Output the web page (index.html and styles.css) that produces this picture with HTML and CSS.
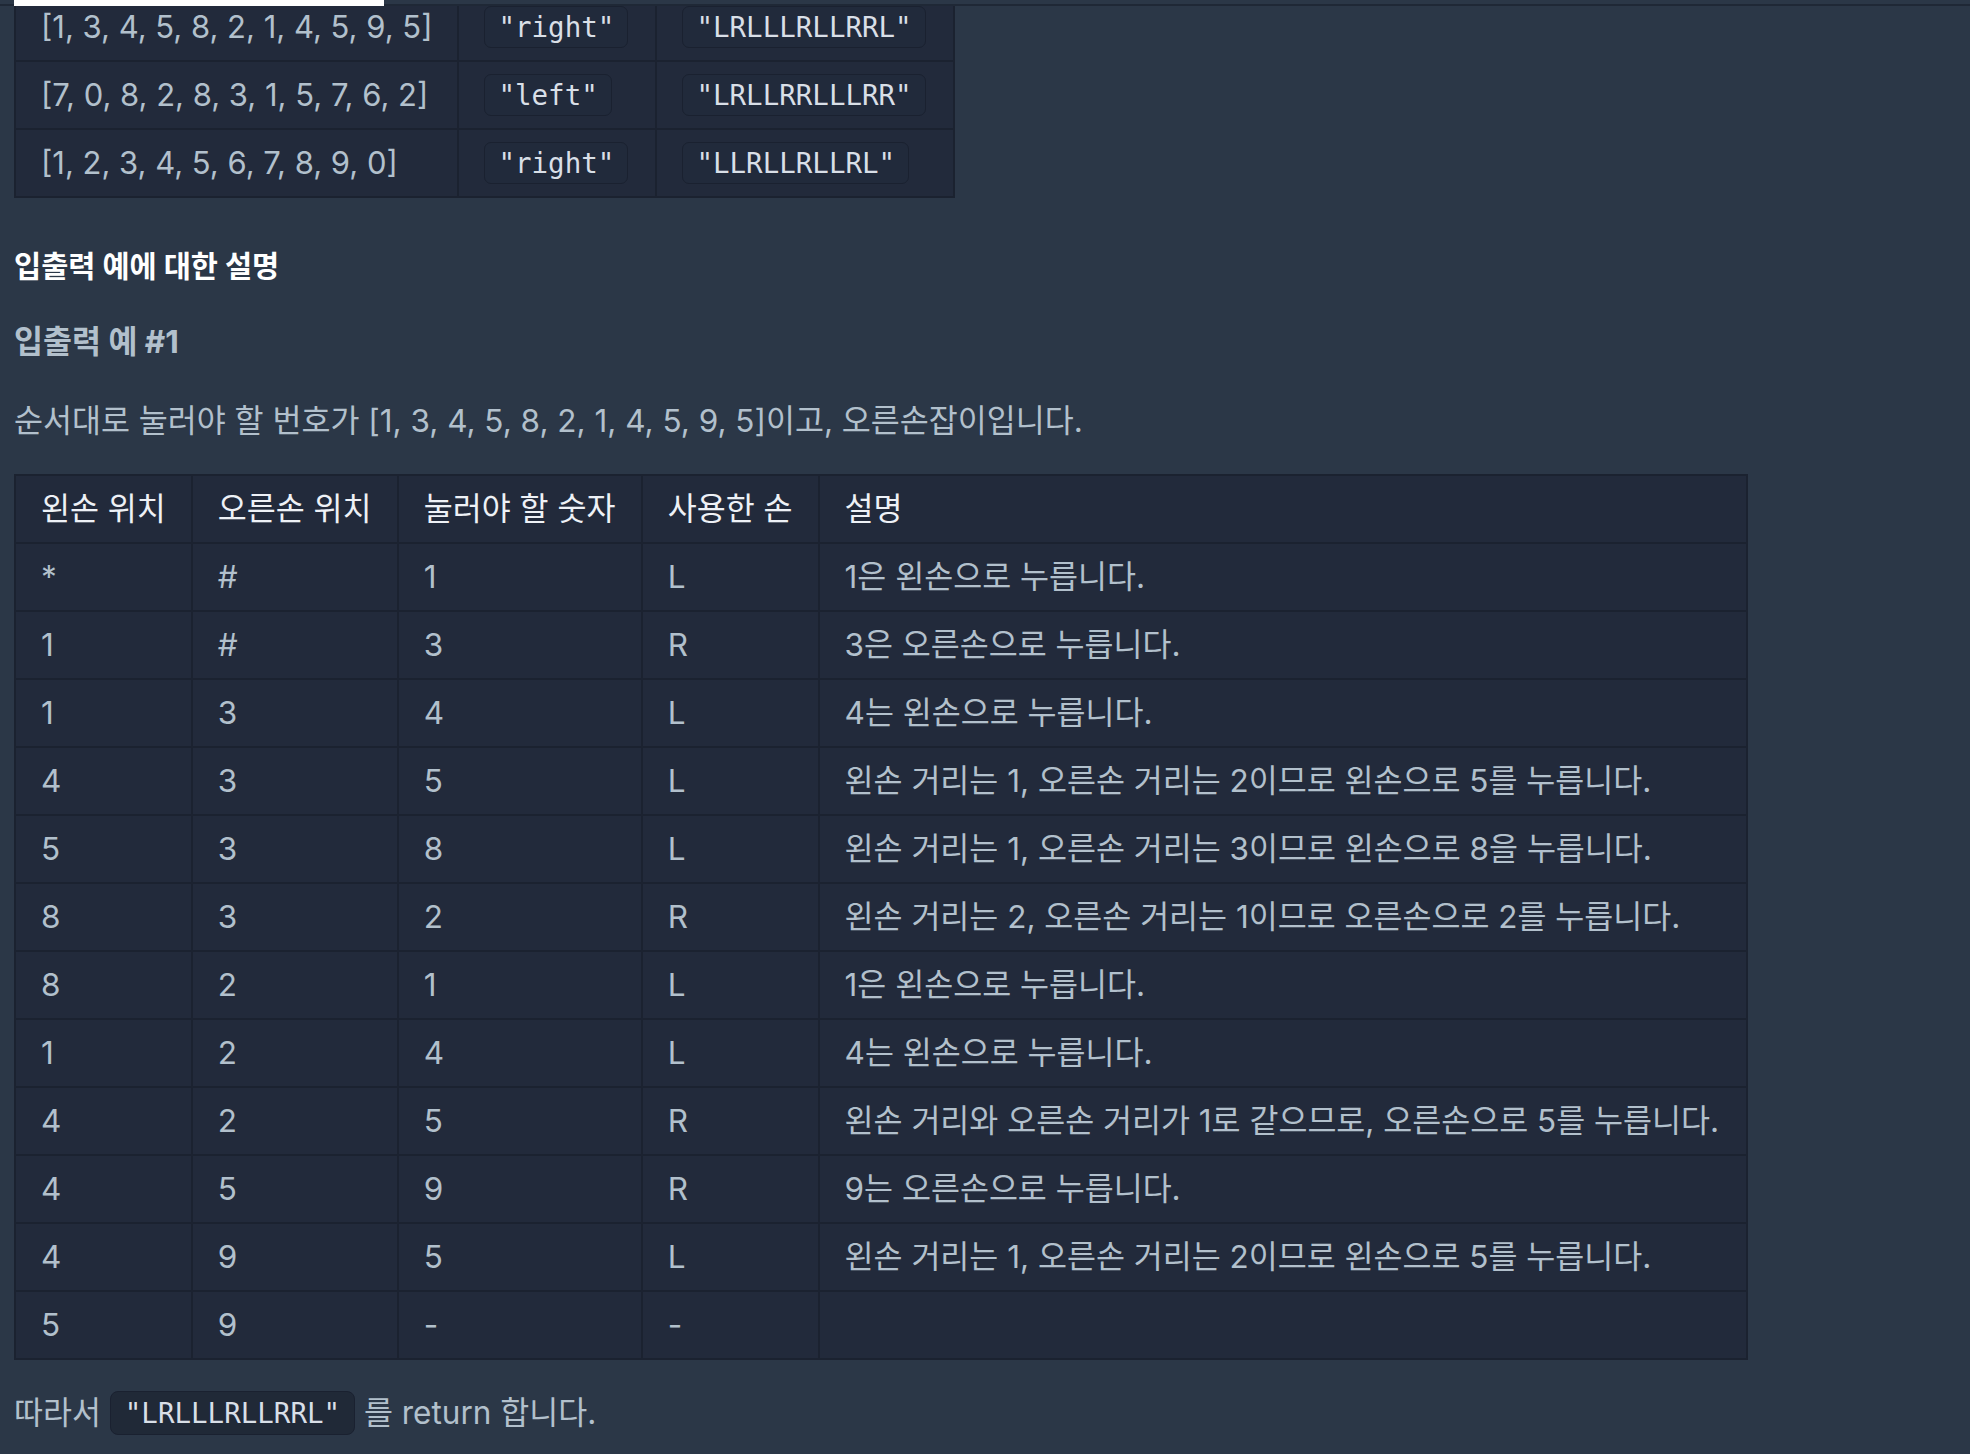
FILE: index.html
```html
<!DOCTYPE html>
<html lang="ko">
<head>
<meta charset="utf-8">
<title>입출력 예</title>
<link rel="stylesheet" href="styles.css">
</head>
<body>
<div class="tabbar"><span class="tab-active"></span></div>
<main class="content">
  <table class="io-table">
    <colgroup>
      <col class="c-num"><col class="c-hand"><col class="c-res">
    </colgroup>
    <tbody>
      <tr><td>[1, 3, 4, 5, 8, 2, 1, 4, 5, 9, 5]</td><td><code class="chip">"right"</code></td><td><code class="chip">"LRLLLRLLRRL"</code></td></tr>
      <tr><td>[7, 0, 8, 2, 8, 3, 1, 5, 7, 6, 2]</td><td><code class="chip">"left"</code></td><td><code class="chip">"LRLLRRLLLRR"</code></td></tr>
      <tr><td>[1, 2, 3, 4, 5, 6, 7, 8, 9, 0]</td><td><code class="chip">"right"</code></td><td><code class="chip">"LLRLLRLLRL"</code></td></tr>
    </tbody>
  </table>

  <h5 class="section-title">입출력 예에 대한 설명</h5>
  <h6 class="sub-title">입출력 예 #1</h6>
  <p class="text">순서대로 눌러야 할 번호가 [1, 3, 4, 5, 8, 2, 1, 4, 5, 9, 5]이고, 오른손잡이입니다.</p>

  <table class="step-table">
    <colgroup>
      <col class="s1"><col class="s2"><col class="s3"><col class="s4"><col class="s5">
    </colgroup>
    <thead>
      <tr><th>왼손 위치</th><th>오른손 위치</th><th>눌러야 할 숫자</th><th>사용한 손</th><th>설명</th></tr>
    </thead>
    <tbody>
      <tr><td>*</td><td>#</td><td>1</td><td>L</td><td>1은 왼손으로 누릅니다.</td></tr>
      <tr><td>1</td><td>#</td><td>3</td><td>R</td><td>3은 오른손으로 누릅니다.</td></tr>
      <tr><td>1</td><td>3</td><td>4</td><td>L</td><td>4는 왼손으로 누릅니다.</td></tr>
      <tr><td>4</td><td>3</td><td>5</td><td>L</td><td>왼손 거리는 1, 오른손 거리는 2이므로 왼손으로 5를 누릅니다.</td></tr>
      <tr><td>5</td><td>3</td><td>8</td><td>L</td><td>왼손 거리는 1, 오른손 거리는 3이므로 왼손으로 8을 누릅니다.</td></tr>
      <tr><td>8</td><td>3</td><td>2</td><td>R</td><td>왼손 거리는 2, 오른손 거리는 1이므로 오른손으로 2를 누릅니다.</td></tr>
      <tr><td>8</td><td>2</td><td>1</td><td>L</td><td>1은 왼손으로 누릅니다.</td></tr>
      <tr><td>1</td><td>2</td><td>4</td><td>L</td><td>4는 왼손으로 누릅니다.</td></tr>
      <tr><td>4</td><td>2</td><td>5</td><td>R</td><td>왼손 거리와 오른손 거리가 1로 같으므로, 오른손으로 5를 누릅니다.</td></tr>
      <tr><td>4</td><td>5</td><td>9</td><td>R</td><td>9는 오른손으로 누릅니다.</td></tr>
      <tr><td>4</td><td>9</td><td>5</td><td>L</td><td>왼손 거리는 1, 오른손 거리는 2이므로 왼손으로 5를 누릅니다.</td></tr>
      <tr><td>5</td><td>9</td><td>-</td><td>-</td><td></td></tr>
    </tbody>
  </table>

  <p class="text result">따라서 <code class="chip chip-inline">"LRLLLRLLRRL"</code> 를 return 합니다.</p>
</main>
</body>
</html>
```

FILE: styles.css
```css
html, body {
  margin: 0;
  padding: 0;
}

body {
  background: #2b3747;
  color: #b2c0cc;
  font-family: "Inter", "Noto Sans CJK KR", sans-serif;
  font-size: 31.5px;
  overflow: hidden;
  height: 1454px;
}

.tabbar {
  position: absolute;
  top: 0;
  left: 0;
  right: 0;
  height: 4px;
  border-bottom: 2px solid #1f2836;
  background: #2b3747;
  z-index: 2;
}

.tab-active {
  position: absolute;
  left: 14px;
  top: 0;
  width: 370px;
  height: 6px;
  background: #ffffff;
}

.content {
  padding: 0 14px;
}

table {
  border-collapse: collapse;
  background: #222a3b;
  border: 2px solid #1b2230;
}

td, th {
  border: 2px solid #1b2230;
  padding: 12px 25px;
  line-height: 42px;
  text-align: left;
  white-space: nowrap;
  vertical-align: middle;
}

.io-table {
  margin-top: -8px;
}

.io-table td {
  font-size: 31px;
}

.c-num { width: 441px; }
.c-hand { width: 198px; }
.c-res { width: 298px; }

.chip {
  display: inline-block;
  font-family: "DejaVu Sans Mono", monospace;
  font-size: 27.5px;
  line-height: 40px;
  padding: 0 13px;
  color: #d9dfe7;
  background: #212a3b;
  border: 1px solid #1a2130;
  border-radius: 7px;
  vertical-align: top;
}

.section-title {
  margin: 48px 0 0;
  font-size: 29.5px;
  line-height: 40px;
  font-weight: 700;
  color: #ffffff;
}

.sub-title {
  margin: 36px 0 0;
  font-size: 31.5px;
  line-height: 40px;
  font-weight: 700;
  color: #b2c0cc;
}

.text {
  margin: 37px 0 0;
  line-height: 44px;
}

.step-table {
  margin-top: 31px;
}

.step-table th {
  font-weight: 400;
  color: #eef1f6;
}

.s1 { width: 176px; }
.s2 { width: 206px; }
.s3 { width: 244px; }
.s4 { width: 175px; }
.s5 { width: 928px; }

.result {
  margin-top: 31px;
}

.chip-inline {
  line-height: 42px;
  padding: 0 14px;
  background: #202937;
  border-radius: 8px;
}
```
